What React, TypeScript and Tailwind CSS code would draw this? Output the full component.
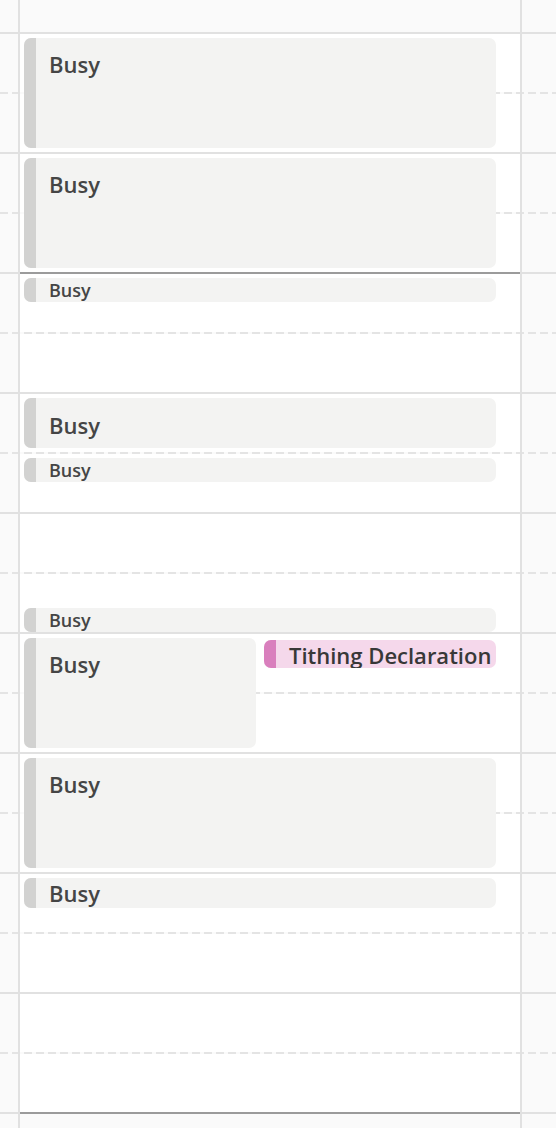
import React from 'react';

type CalEvent = {
  id: string;
  title: string;
  top: number;
  height: number;
  left: number;
  width: number;
  size: 'lg' | 'sm';
  pad: number;
  kind: 'busy' | 'pink';
};

// page coords: column starts at x=20, first hour line at y=32, 120px per hour
const events: CalEvent[] = [
  { id: 'e1', title: 'Busy', top: 38, height: 110, left: 4, width: 472, size: 'lg', pad: 11, kind: 'busy' },
  { id: 'e2', title: 'Busy', top: 158, height: 110, left: 4, width: 472, size: 'lg', pad: 11, kind: 'busy' },
  { id: 'e3', title: 'Busy', top: 278, height: 24, left: 4, width: 472, size: 'sm', pad: 0, kind: 'busy' },
  { id: 'e4', title: 'Busy', top: 398, height: 50, left: 4, width: 472, size: 'lg', pad: 12, kind: 'busy' },
  { id: 'e5', title: 'Busy', top: 458, height: 24, left: 4, width: 472, size: 'sm', pad: 0, kind: 'busy' },
  { id: 'e6', title: 'Busy', top: 608, height: 24, left: 4, width: 472, size: 'sm', pad: 0, kind: 'busy' },
  { id: 'e7', title: 'Busy', top: 638, height: 110, left: 4, width: 232, size: 'lg', pad: 11, kind: 'busy' },
  { id: 'e8', title: 'Tithing Declaration', top: 640, height: 28, left: 244, width: 232, size: 'lg', pad: 0, kind: 'pink' },
  { id: 'e9', title: 'Busy', top: 758, height: 110, left: 4, width: 472, size: 'lg', pad: 11, kind: 'busy' },
  { id: 'e10', title: 'Busy', top: 878, height: 30, left: 4, width: 472, size: 'lg', pad: 0, kind: 'busy' },
];

const darkRows = new Set([2, 9]);

const HourLine = ({ dark }: { dark: boolean }) => (
  <div className="flex h-[2px] shrink-0">
    <div className="w-[20px] bg-[#e1e1e1]" />
    <div className={`w-[500px] ${dark ? 'bg-[#9b9b9b]' : 'bg-[#e1e1e1]'}`} />
    <div className="flex-1 bg-[#e1e1e1]" />
  </div>
);

const Dashed = () => (
  <div className="h-[2px] shrink-0 bg-[linear-gradient(to_right,#e4e4e4_8px,transparent_8px)] bg-[length:12px_2px]" />
);

const Body = () => (
  <div className="flex h-[58px] shrink-0">
    <div className="w-[20px]" />
    <div className="w-[500px] bg-white" />
  </div>
);

const EventBlock = ({ ev }: { ev: CalEvent }) => {
  const pink = ev.kind === 'pink';
  return (
    <div
      className={`absolute flex overflow-hidden rounded-[7px] ${pink ? 'bg-[#f5d8eb]' : 'bg-[#f3f3f2]'}`}
      style={{ top: ev.top, height: ev.height, left: ev.left, width: ev.width }}
    >
      <div className={`w-[12px] shrink-0 ${pink ? 'bg-[#d97fbd]' : 'bg-[#d2d2d1]'}`} />
      <div
        className={`min-w-0 flex-1 overflow-hidden whitespace-nowrap pl-[13px] pr-[8px] font-semibold ${
          ev.size === 'lg' ? 'text-[22px] leading-[30px]' : 'text-[18px] leading-[24px]'
        } ${pink ? 'text-[#383838]' : 'text-[#454545]'}`}
        style={{ paddingTop: ev.pad }}
      >
        {ev.title}
      </div>
    </div>
  );
};

export default function App() {
  return (
    <div className="grid h-[1128px] w-[556px] overflow-hidden bg-[#fafafa] font-['Open_Sans','Noto_Sans',sans-serif]">
      {/* grid lines */}
      <div className="flex flex-col [grid-area:1/1]">
        <div className="h-[32px] shrink-0" />
        {Array.from({ length: 9 }).map((_, i) => (
          <div key={i} className="flex flex-col">
            <HourLine dark={darkRows.has(i)} />
            <Body />
            <Dashed />
            <Body />
          </div>
        ))}
        <HourLine dark={true} />
      </div>

      {/* vertical separators */}
      <div className="flex [grid-area:1/1]">
        <div className="w-[18px]" />
        <div className="w-[2px] bg-[#e1e1e1]" />
        <div className="w-[500px]" />
        <div className="w-[2px] bg-[#e1e1e1]" />
      </div>

      {/* events */}
      <div className="relative ml-[20px] w-[500px] [grid-area:1/1]">
        {events.map((ev) => (
          <EventBlock key={ev.id} ev={ev} />
        ))}
      </div>
    </div>
  );
}
